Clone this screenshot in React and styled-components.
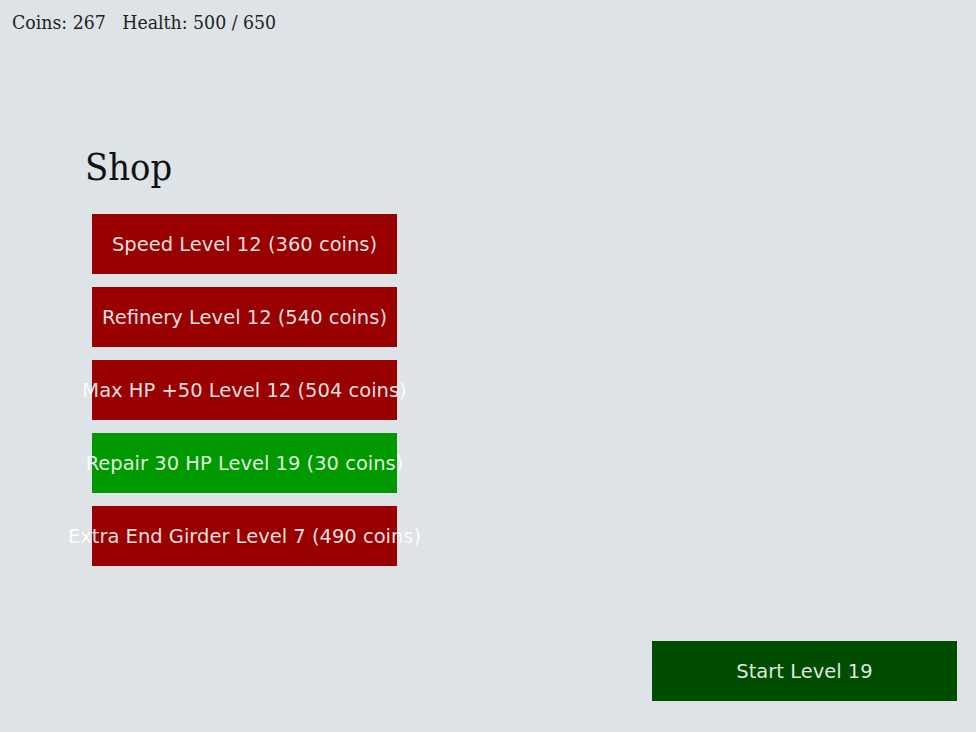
import React from "react";
import styled, { createGlobalStyle } from "styled-components";

const GlobalStyle = createGlobalStyle`
  html, body {
    margin: 0;
    padding: 0;
    background: #dee3e7;
  }
`;

const Screen = styled.div`
  height: 732px;
  display: flex;
  flex-direction: column;
  box-sizing: border-box;
  padding: 0 19px 31px 12px;
`;

const StatusBar = styled.div`
  font-family: "DejaVu Serif Condensed", "DejaVu Serif", serif;
  font-size: 19.3px;
  color: #222;
  padding-top: 12px;
  line-height: 22px;
  white-space: pre;
`;

const ShopPanel = styled.div`
  margin-top: 111px;
  margin-left: 73px;
  display: flex;
  flex-direction: column;
`;

const Title = styled.h1`
  margin: 0 0 25px 0;
  font-family: "DejaVu Serif Condensed", "DejaVu Serif", serif;
  font-weight: normal;
  font-size: 37.7px;
  line-height: 44px;
  color: #111;
`;

const ItemList = styled.div`
  display: flex;
  flex-direction: column;
  gap: 13px;
  padding-left: 7px;
`;

const ShopButton = styled.div`
  width: 305px;
  height: 60px;
  display: flex;
  align-items: center;
  justify-content: center;
  white-space: nowrap;
  background: ${(p) => (p.$affordable ? "#009900" : "#990000")};
  color: rgba(255, 255, 255, 0.88);
  font-family: "DejaVu Sans", sans-serif;
  font-size: 19.5px;
`;

const StartButton = styled(ShopButton)`
  margin-top: auto;
  align-self: flex-end;
  background: #004d00;
`;

const items = [
  { label: "Speed Level 12 (360 coins)", ok: false },
  { label: "Refinery Level 12 (540 coins)", ok: false },
  { label: "Max HP +50 Level 12 (504 coins)", ok: false },
  { label: "Repair 30 HP Level 19 (30 coins)", ok: true },
  { label: "Extra End Girder Level 7 (490 coins)", ok: false },
];

export default function App() {
  return (
    <>
      <GlobalStyle />
      <Screen>
        <StatusBar>{"Coins: 267   Health: 500 / 650"}</StatusBar>
        <ShopPanel>
          <Title>Shop</Title>
          <ItemList>
            {items.map((item, i) => (
              <ShopButton key={i} $affordable={item.ok}>
                {item.label}
              </ShopButton>
            ))}
          </ItemList>
        </ShopPanel>
        <StartButton>Start Level 19</StartButton>
      </Screen>
    </>
  );
}
